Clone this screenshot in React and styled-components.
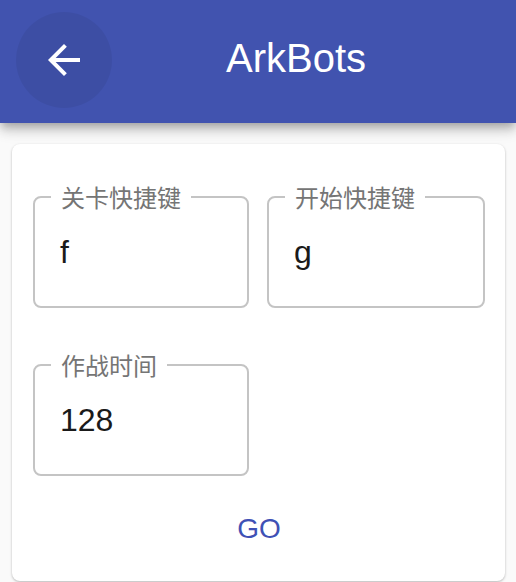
import React from "react";
import styled, { createGlobalStyle } from "styled-components";

const Global = createGlobalStyle`
  html, body { margin: 0; padding: 0; }
  body {
    background: #fafafa;
    font-family: "Liberation Sans", Arial, "Noto Sans CJK SC", sans-serif;
    width: 516px;
    height: 582px;
    overflow: hidden;
  }
`;

const Page = styled.div`
  display: flex;
  flex-direction: column;
  min-height: 582px;
`;

const AppBar = styled.header`
  position: relative;
  z-index: 2;
  height: 123px;
  background: #4153af;
  display: flex;
  align-items: center;
  padding: 0 36px 0 16px;
  box-sizing: border-box;
  box-shadow: 0 4px 8px -2px rgba(0, 0, 0, 0.2), 0 8px 10px 0 rgba(0, 0, 0, 0.14),
    0 2px 20px 0 rgba(0, 0, 0, 0.12);
`;

const IconButton = styled.button`
  width: 96px;
  height: 96px;
  margin-top: -3px;
  border: none;
  border-radius: 50%;
  background: rgba(0, 0, 0, 0.06);
  display: flex;
  align-items: center;
  justify-content: center;
  padding: 0;
  cursor: pointer;
  flex: none;
`;

const Title = styled.h1`
  flex: 1;
  margin: 0 0 6px;
  text-align: center;
  color: #fff;
  font-size: 40px;
  font-weight: 400;
  font-family: "Liberation Sans", Arial, sans-serif;
`;

const Main = styled.main`
  padding: 21px 11px 0 12px;
`;

const Card = styled.section`
  background: #fff;
  border-radius: 8px;
  box-shadow: 0 1px 3px rgba(0, 0, 0, 0.18), 0 1px 2px rgba(0, 0, 0, 0.1);
  padding: 41px 20px 16px 21px;
  display: flex;
  flex-direction: column;
  min-height: 437px;
  box-sizing: border-box;
`;

const Grid = styled.div`
  display: grid;
  grid-template-columns: 216px 218px;
  column-gap: 18px;
  row-gap: 45px;
`;

const Field = styled.fieldset`
  margin: 0;
  border: 2px solid #c4c4c4;
  border-radius: 8px;
  padding: 24px 16px 34px;
  min-width: 0;
  height: 123px;
  box-sizing: border-box;
`;

const Legend = styled.legend`
  padding: 0 10px;
  font-family: "Noto Sans CJK SC", sans-serif;
  font-size: 24px;
  line-height: 24px;
  color: #757575;
`;

const Value = styled.div`
  margin-left: 9px;
  font-size: 32px;
  line-height: 38px;
  height: 38px;
  color: #1a1a1a;
  font-family: "Liberation Sans", Arial, sans-serif;
`;

const Actions = styled.div`
  display: flex;
  justify-content: center;
  margin-top: 16px;
`;

const TextButton = styled.button`
  border: none;
  background: transparent;
  color: #3f51b5;
  font-family: "Liberation Sans", Arial, sans-serif;
  font-size: 28px;
  line-height: 49px;
  padding: 12px 16px;
  border-radius: 8px;
  cursor: pointer;
`;

const ArrowBack = () => (
  <svg width="48" height="48" viewBox="0 0 24 24" fill="#fff">
    <path d="M20 11H7.83l5.59-5.59L12 4l-8 8 8 8 1.41-1.41L7.83 13H20v-2z" />
  </svg>
);

const fields = [
  { label: "关卡快捷键", value: "f" },
  { label: "开始快捷键", value: "g" },
  { label: "作战时间", value: "128" },
];

export default function App() {
  return (
    <Page>
      <Global />
      <AppBar>
        <IconButton aria-label="back">
          <ArrowBack />
        </IconButton>
        <Title>ArkBots</Title>
      </AppBar>
      <Main>
        <Card>
          <Grid>
            {fields.map((f) => (
              <Field key={f.label}>
                <Legend>{f.label}</Legend>
                <Value>{f.value}</Value>
              </Field>
            ))}
          </Grid>
          <Actions>
            <TextButton>GO</TextButton>
          </Actions>
        </Card>
      </Main>
    </Page>
  );
}
